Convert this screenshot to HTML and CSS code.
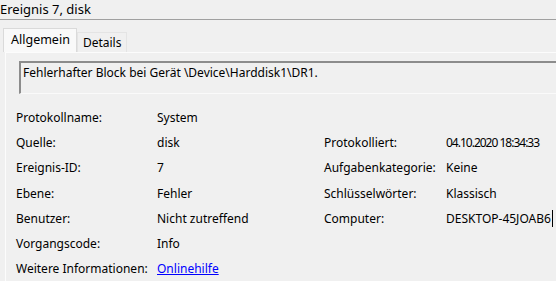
FILE: index.html
```html
<!DOCTYPE html>
<html lang="de">
<head>
<meta charset="utf-8">
<link rel="stylesheet" href="styles.css">
</head>
<body>
<div class="window">
  <div class="title">Ereignis 7, disk</div>
  <div class="sep"></div>
  <div class="tabs">
    <div class="tab active">Allgemein</div>
    <div class="tab">Details</div>
  </div>
  <div class="panel">
    <div class="msg">Fehlerhafter Block bei Gerät \Device\Harddisk1\DR1.</div>
    <div class="props">
      <div class="lbl">Protokollname:</div><div class="val">System</div><div></div><div></div>
      <div class="lbl">Quelle:</div><div class="val">disk</div><div class="lbl">Protokolliert:</div><div class="val date">04.10.2020 18:34:33</div>
      <div class="lbl">Ereignis-ID:</div><div class="val">7</div><div class="lbl">Aufgabenkategorie:</div><div class="val">Keine</div>
      <div class="lbl">Ebene:</div><div class="val">Fehler</div><div class="lbl">Schlüsselwörter:</div><div class="val">Klassisch</div>
      <div class="lbl">Benutzer:</div><div class="val">Nicht zutreffend</div><div class="lbl">Computer:</div><div class="val"><span class="caret">DESKTOP-45JOAB6</span></div>
      <div class="lbl">Vorgangscode:</div><div class="val">Info</div><div></div><div></div>
      <div class="lbl">Weitere Informationen:</div><div class="val"><a class="link" href="#">Onlinehilfe</a></div><div></div><div></div>
    </div>
  </div>
</div>
</body>
</html>
```
FILE: styles.css
```css
html, body {
  margin: 0;
  padding: 0;
  background: #f0f0f0;
}
.window {
  width: 556px;
  height: 281px;
  overflow: hidden;
  font-family: "Noto Sans", "Open Sans", sans-serif;
  font-size: 12px;
  color: #000;
  display: flex;
  flex-direction: column;
}
.title {
  height: 19px;
  font-size: 13px;
  line-height: 19px;
  padding-left: 0;
}
.sep {
  height: 1px;
  border-top: 1px solid #a0a0a0;
  background: #e4e4e4;
}
.tabs {
  display: flex;
  align-items: flex-end;
  margin-top: 8px;
  padding-left: 3px;
  height: 24px;
}
.tab {
  height: 19px;
  line-height: 19px;
  padding: 0 5px;
  background: #f0f0f0;
  border: 1px solid #e4e4e4;
  border-bottom: none;
}
.tab.active {
  height: 23px;
  line-height: 21px;
  background: #f9f9f9;
  padding: 0 6px 0 7px;
  border-color: #dadada;
  font-size: 12.5px;
}
.panel {
  flex: 1;
  margin-left: 5px;
  border-top: 1px solid #fcfcfc;
  border-left: 1px solid #fcfcfc;
  padding: 8px 0 0 13px;
  display: flex;
  flex-direction: column;
}
.msg {
  height: 28px;
  border-top: 2px solid #8c8c8c;
  border-left: 2px solid #8c8c8c;
  border-bottom: 1px solid #fafafa;
  padding: 2px 0 0 2px;
  line-height: 16px;
  margin-right: -10px;
}
.props {
  display: grid;
  grid-template-columns: 141px 167px 122px 1fr;
  grid-auto-rows: 25.2px;
  margin-top: 16px;
  margin-left: -3px;
  line-height: 16px;
  white-space: nowrap;
}
.date {
  letter-spacing: -1px;
}
.caret {
  border-right: 1px solid #000;
  padding-right: 1px;
}
.link {
  color: #0000ff;
  text-decoration: underline;
}
```
